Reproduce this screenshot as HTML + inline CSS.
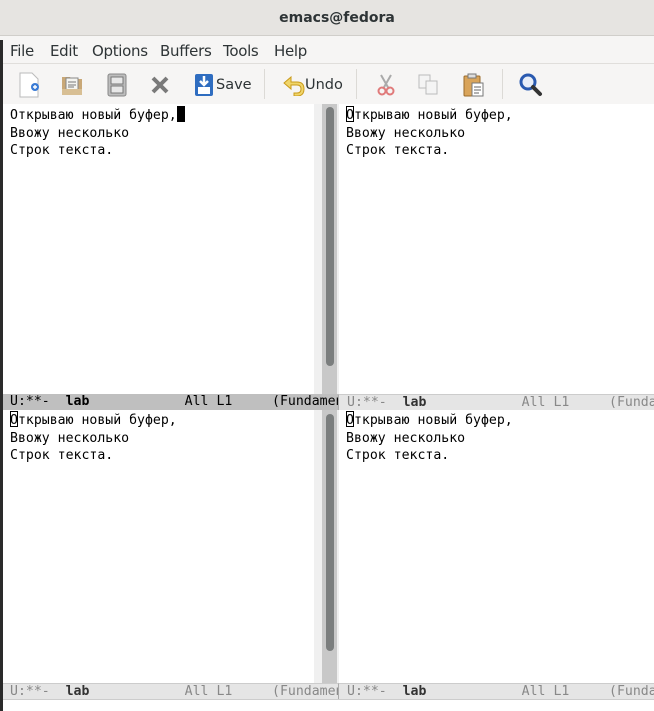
<!DOCTYPE html>
<html><head><meta charset="utf-8"><style>
*{margin:0;padding:0;box-sizing:border-box}
body{width:654px;height:711px;overflow:hidden;background:#fff;position:relative;font-family:"Liberation Sans","DejaVu Sans",sans-serif}
.abs{position:absolute}
#title{left:0;top:0;width:674px;height:36px;background:#e6e4e1;border-bottom:1px solid #d0ceca;text-align:center;font:bold 14px "DejaVu Sans",sans-serif;color:#2e3436;line-height:37px}
#menu{left:0;top:36px;width:654px;height:28px;background:#f6f5f4;font:15px "DejaVu Sans",sans-serif;color:#2e3436;border-bottom:1px solid #e0dedb}
#menu span{position:absolute;top:6px;letter-spacing:-0.3px}
#tool{left:0;top:64px;width:654px;height:40px;background:#f6f5f4;font:14.5px "DejaVu Sans",sans-serif;color:#2e3436}
.sep{position:absolute;top:5px;width:1px;height:30px;background:#dcdad6}
.txt{font:13.2px "DejaVu Sans Mono",monospace;color:#000;line-height:17.5px;white-space:pre;position:absolute}
.ml{position:absolute;height:16px;font:13.2px "DejaVu Sans Mono",monospace;line-height:16px;white-space:pre;overflow:hidden}
.gut{position:absolute;background:#f0f0f0}
.tr{position:absolute;background:#c8c8c8}
.th{position:absolute;background:#7b7e7e;border-radius:4px}
.cur{display:inline-block;border:1px solid #000;width:8px;height:16px;vertical-align:-3px;margin-right:-8px}
</style></head><body>
<div id="title" class="abs">emacs@fedora</div>
<div id="menu" class="abs"><span style="left:10px">File</span><span style="left:50px">Edit</span><span style="left:92px">Options</span><span style="left:160px">Buffers</span><span style="left:223px">Tools</span><span style="left:274px">Help</span></div>
<div id="tool" class="abs">
<svg class="abs" style="left:18px;top:8px" width="24" height="26"><path d="M2 1h12l6 6v18H2z" fill="#fff" stroke="#bbb"/><circle cx="17" cy="15" r="4" fill="#3a7bd5"/><path d="M15 15h4M17 13v4" stroke="#fff" stroke-width="1.4"/></svg>
<svg class="abs" style="left:60px;top:9px" width="24" height="24"><path d="M2 4h8l2 2h10v16H2z" fill="#c9a877"/><rect x="6" y="5" width="12" height="12" fill="#f4f4f0" stroke="#888"/><path d="M8 9h8M8 12h8M8 14h6" stroke="#777"/><path d="M2 16h20v6H2z" fill="#d8bf94"/></svg>
<svg class="abs" style="left:106px;top:9px" width="22" height="24"><rect x="2" y="1" width="18" height="22" rx="2" fill="#bdbdbd" stroke="#888"/><rect x="5" y="4" width="12" height="7" fill="#e8e8e8" stroke="#777"/><rect x="5" y="13" width="12" height="7" fill="#e8e8e8" stroke="#777"/></svg>
<svg class="abs" style="left:150px;top:11px" width="20" height="20"><path d="M3 3L17 17M17 3L3 17" stroke="#7a7a7a" stroke-width="4"/></svg>
<svg class="abs" style="left:194px;top:9px" width="20" height="24"><rect x="1" y="1" width="18" height="22" rx="2" fill="#2f6dc0"/><rect x="4" y="14" width="12" height="7" fill="#fff"/><path d="M10 3v9M6 8l4 4 4-4" stroke="#fff" stroke-width="2.5" fill="none"/></svg>
<span class="abs" style="left:216px;top:13px">Save</span>
<div class="sep" style="left:264px"></div>
<svg class="abs" style="left:282px;top:10px" width="24" height="22"><path d="M9 3L2 9l7 6v-4h6c3 0 4 2 4 4s-1 4-4 4h-3v3h3c5 0 7-3 7-7s-2-7-7-7H9z" fill="#f0d56a" stroke="#c99a1a"/></svg>
<span class="abs" style="left:305px;top:13px">Undo</span>
<div class="sep" style="left:356px"></div>
<svg class="abs" style="left:375px;top:9px" width="22" height="24"><path d="M6 2l8 14M16 2L8 16" stroke="#aaa" stroke-width="2"/><circle cx="7" cy="18" r="3.5" fill="none" stroke="#e07a7a" stroke-width="2"/><circle cx="15" cy="18" r="3.5" fill="none" stroke="#e07a7a" stroke-width="2"/></svg>
<svg class="abs" style="left:418px;top:10px" width="22" height="22"><rect x="1" y="1" width="11" height="13" fill="#f4f4f4" stroke="#bbb"/><rect x="8" y="7" width="11" height="13" fill="#f4f4f4" stroke="#bbb"/></svg>
<svg class="abs" style="left:463px;top:8px" width="22" height="26"><rect x="1" y="4" width="16" height="20" rx="1" fill="#d9a45a" stroke="#9a6a2a"/><rect x="5" y="2" width="8" height="4" fill="#ddd" stroke="#777"/><rect x="9" y="11" width="11" height="13" fill="#fff" stroke="#777"/><path d="M11 15h7M11 18h7M11 21h5" stroke="#666"/></svg>
<div class="sep" style="left:502px"></div>
<svg class="abs" style="left:518px;top:8px" width="26" height="26"><circle cx="10" cy="10" r="7" fill="#e8eef8" stroke="#2a5ab0" stroke-width="3"/><path d="M15 15l7 7" stroke="#333" stroke-width="4" stroke-linecap="round"/></svg>
</div>
<div class="abs" style="left:0;top:40px;width:3px;height:671px;background:#2a2a2a"></div>
<div class="gut" style="left:314px;top:104px;width:8px;height:290px"></div>
<div class="tr" style="left:322px;top:104px;width:15px;height:290px"></div>
<div class="th" style="left:326px;top:107px;width:8px;height:259px"></div>
<div class="gut" style="left:314px;top:410px;width:8px;height:273px"></div>
<div class="tr" style="left:322px;top:410px;width:15px;height:273px"></div>
<div class="th" style="left:326px;top:414px;width:8px;height:237px"></div>
<div class="abs" style="left:337px;top:104px;width:2px;height:595px;background:#f0f0f0"></div>
<div class="txt" style="left:10px;top:106px">Открываю новый буфер,<span style="display:inline-block;width:8px;height:16px;background:#000;vertical-align:-3px"></span>
Ввожу несколько
Строк текста.</div>
<div class="txt" style="left:346px;top:106px"><span class="cur"></span>Открываю новый буфер,
Ввожу несколько
Строк текста.</div>
<div class="txt" style="left:10px;top:411px"><span class="cur"></span>Открываю новый буфер,
Ввожу несколько
Строк текста.</div>
<div class="txt" style="left:346px;top:411px"><span class="cur"></span>Открываю новый буфер,
Ввожу несколько
Строк текста.</div>
<div class="ml" style="left:3px;top:394px;width:335px;background:#bfbfbf;color:#000;padding-left:7px">U:**-  <b>lab</b>            All L1     (Fundamental)</div>
<div class="ml" style="left:338px;top:394px;width:316px;background:#e5e5e5;color:#888;padding-left:8px;border-left:1px solid #aaa;border-top:1px solid #ccc">U:**-  <b style="color:#333">lab</b>            All L1     (Fundamental)</div>
<div class="ml" style="left:3px;top:683px;width:335px;background:#e5e5e5;color:#888;padding-left:7px;border-top:1px solid #ccc">U:**-  <b style="color:#333">lab</b>            All L1     (Fundamental)</div>
<div class="ml" style="left:338px;top:683px;width:316px;background:#e5e5e5;color:#888;padding-left:8px;border-left:1px solid #aaa;border-top:1px solid #ccc">U:**-  <b style="color:#333">lab</b>            All L1     (Fundamental)</div>
<div class="abs" style="left:3px;top:699px;width:651px;height:1px;background:#ccc"></div>
</body></html>
